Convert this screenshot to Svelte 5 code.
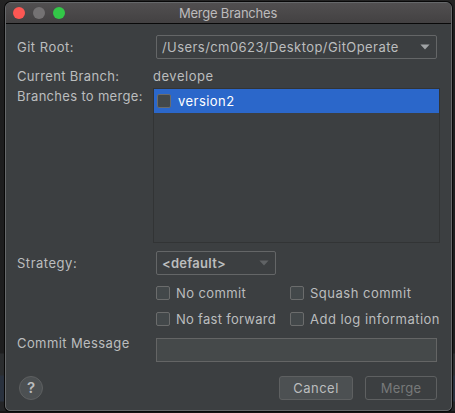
<script>
  let noCommit = $state(false);
  let squash = $state(false);
  let noFastForward = $state(false);
  let addLog = $state(false);
  let message = $state('');
</script>

<div class="desktop">
  <div class="strip"></div>
  <div class="window">
    <header>
      <div class="lights"><i class="close"></i><i class="min"></i><i class="max"></i></div>
      <h1>Merge Branches</h1>
    </header>
    <main>
      <div class="row root">
        <span class="label gr">Git Root:</span>
        <div class="combo wide">
          <span class="path">/Users/cm0623/Desktop/GitOperate</span>
          <svg width="10" height="6" viewBox="0 0 10 6"><path d="M0.4 0.5H9.6L5 5.6Z" fill="#a0a3a5" /></svg>
        </div>
      </div>
      <div class="row current">
        <span class="label cb">Current Branch:</span>
        <span class="branch">develope</span>
      </div>
      <div class="row merge-list">
        <span class="label bm">Branches to merge:</span>
        <div class="list">
          <div class="item"><i class="check"></i><span>version2</span></div>
        </div>
      </div>
      <div class="row strategy">
        <span class="label">Strategy:</span>
        <div class="combo narrow">
          <b>&lt;default&gt;</b>
          <svg width="10" height="6" viewBox="0 0 10 6"><path d="M0.4 0.5H9.6L5 5.6Z" fill="#606365" /></svg>
        </div>
      </div>
      <div class="options">
        <label><input class="check" type="checkbox" bind:checked={noCommit} /><span class="nc">No commit</span></label>
        <label><input class="check" type="checkbox" bind:checked={squash} /><span class="sc">Squash commit</span></label>
        <label><input class="check" type="checkbox" bind:checked={noFastForward} /><span class="ff">No fast forward</span></label>
        <label><input class="check" type="checkbox" bind:checked={addLog} /><span class="al">Add log information</span></label>
      </div>
      <div class="row message">
        <span class="label cm">Commit Message</span>
        <input class="field" type="text" bind:value={message} />
      </div>
      <footer>
        <button class="help">?</button>
        <button class="cancel">Cancel</button>
        <button class="merge" disabled>Merge</button>
      </footer>
    </main>
  </div>
</div>

<style>
  :global(body) { background: #202021; overflow: hidden; }
  * { box-sizing: border-box; }
  .desktop {
    width: 455px; height: 413px; padding: 2px 3px 2px 5px; position: relative;
    font: 13px/16px Inter, "Liberation Sans", sans-serif;
    letter-spacing: 0.6px; color: #bbbdbe; white-space: nowrap;
    background: linear-gradient(#242424 0, #1e1e1f 30px, #1e1e1f 353px, #2b2d2f 354px, #2b2d2f 375px, #29313e 376px, #29313e 401px, #242527 402px, #242527 100%);
  }
  .strip { position: absolute; left: 0; right: 0; bottom: 0; height: 2px; background: #171415; }
  .window {
    position: relative; width: 447px; height: 409px; border: 1px solid #66686a;
    border-radius: 6px 6px 5px 5px; background: #3c3f41;
    box-shadow: 0 0 0 1px #080808; overflow: hidden;
  }
  header {
    height: 21px; display: flex; align-items: center; position: relative;
    background: linear-gradient(#514f50, #434142); border-bottom: 1px solid #090909;
  }
  .lights { display: flex; gap: 8px; padding-left: 7px; }
  .lights i { width: 12px; height: 12px; border-radius: 50%; }
  .close { background: #fc5753; }
  .min { background: #747273; }
  .max { background: #33c748; }
  h1 {
    position: absolute; left: 0; right: 1px; top: 2px; margin: 0; text-align: center;
    font-size: 13px; line-height: 16px; font-weight: 400; letter-spacing: -0.22px; color: #bdbbbc;
  }
  main { padding: 11px 11px 0; }
  .row { display: flex; }
  .label { width: 136px; flex: none; }
  .gr { letter-spacing: 0.5px; }
  .cb { letter-spacing: 0.33px; }
  .bm { letter-spacing: 0.31px; }
  .cm { letter-spacing: 0.4px; }
  .path { letter-spacing: 0.43px; }
  .branch { letter-spacing: 0.52px; }
  .nc { letter-spacing: 0.4px; }
  .sc { letter-spacing: 0.5px; }
  .ff { letter-spacing: 0.28px; }
  .al { letter-spacing: 0.48px; }
  .root { height: 33px; }
  .root .label { padding-top: 4px; }
  .combo {
    height: 24px; border: 1px solid #646667; border-radius: 2px; margin-left: 3px;
    display: flex; align-items: center; justify-content: space-between; padding: 0 6px 0 5px;
  }
  .combo b { letter-spacing: 0.25px; font-weight: 600; }
  .wide { width: 281px; }
  .narrow { width: 120px; }
  .current { height: 20px; line-height: 16px; }
  .merge-list { height: 163px; }
  .list { width: 287px; height: 155px; border: 1px solid #323435; }
  .item {
    height: 24px; background: #2b67ca; color: #fff; display: flex; align-items: center;
    padding-left: 3px; gap: 7px; letter-spacing: 0.45px;
  }
  .check {
    appearance: none; flex: none; margin: 0; width: 14px; height: 14px;
    border: 1px solid #6b6c6c; border-radius: 2px; background: #43484a;
  }
  .strategy .label { padding-top: 4px; letter-spacing: 0.52px; }
  .options {
    display: grid; grid-template-columns: 134px auto; grid-auto-rows: 26px;
    padding: 5px 0 0 139px; height: 63px;
  }
  .options label { display: flex; align-items: center; gap: 6px; }
  .message .label { margin-top: -3px; }
  .message .field {
    width: 281px; height: 24px; margin: 0 0 0 3px; padding: 0 5px;
    border: 1px solid #646565; background: #45494a; color: #bbb; outline: 0; font: inherit;
  }
  footer { display: flex; align-items: center; padding: 14px 3px 0 2px; }
  button {
    font: inherit; letter-spacing: inherit; color: inherit; padding: 0; height: 24px;
    border: 1px solid #5e6061; border-radius: 3px; background: #4c5052;
  }
  .help { width: 24px; border-radius: 50%; font-size: 15px; font-weight: 600; letter-spacing: 0; margin-right: auto; }
  .cancel { width: 74px; margin-right: 12px; letter-spacing: 0.5px; }
  .merge { width: 72px; background: none; color: #777979; letter-spacing: 0.2px; }
</style>
